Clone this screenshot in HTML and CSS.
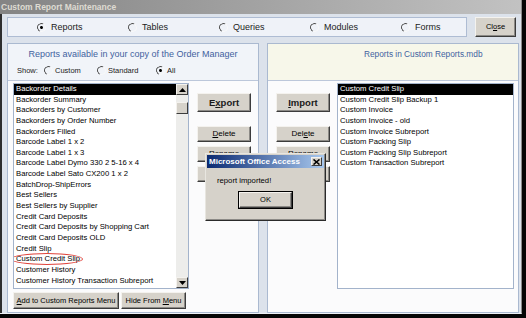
FILE: index.html
```html
<!DOCTYPE html>
<html lang="en">

<head>
    <meta charset="UTF-8">
    <title>Custom Report Maintenance</title>
    <link rel="stylesheet" href="styles.css">
</head>

<body>
    <div class="window">
        <div class="titlebar">Custom Report Maintenance</div>
        <div class="main">
            <!-- object type picker -->
            <div class="topbar">
                <div class="types">
                    <label class="opt"><span class="radio on"></span>Reports</label>
                    <label class="opt"><span class="radio"></span>Tables</label>
                    <label class="opt"><span class="radio"></span>Queries</label>
                    <label class="opt"><span class="radio"></span>Modules</label>
                    <label class="opt"><span class="radio"></span>Forms</label>
                </div>
                <button class="btn close-btn">Cl<u>o</u>se</button>
            </div>

            <div class="panels">
                <!-- Order Manager side -->
                <div class="panel">
                    <div class="panel-head left-head">
                        <div class="head-title">Reports available in your copy of the Order Manager</div>
                        <div class="show-row">
                            <span class="show-label">Show:</span>
                            <label class="opt small"><span class="radio"></span>Custom</label>
                            <label class="opt small"><span class="radio"></span>Standard</label>
                            <label class="opt small"><span class="radio on"></span>All</label>
                        </div>
                    </div>
                    <div class="panel-body left-body">
                        <div class="list-col">
                            <div class="listbox">
                                <ul class="items">
                                    <li class="sel">Backorder Details</li>
                                    <li>Backorder Summary</li>
                                    <li>Backorders by Customer</li>
                                    <li>Backorders by Order Number</li>
                                    <li>Backorders Filled</li>
                                    <li>Barcode Label 1 x 2</li>
                                    <li>Barcode Label 1 x 3</li>
                                    <li>Barcode Label Dymo 330 2 5-16 x 4</li>
                                    <li>Barcode Label Sato CX200 1 x 2</li>
                                    <li>BatchDrop-ShipErrors</li>
                                    <li>Best Sellers</li>
                                    <li>Best Sellers by Supplier</li>
                                    <li>Credit Card Deposits</li>
                                    <li>Credit Card Deposits by Shopping Cart</li>
                                    <li>Credit Card Deposits OLD</li>
                                    <li>Credit Slip</li>
                                    <li class="marked">Custom Credit Slip</li>
                                    <li>Customer History</li>
                                    <li>Customer History Transaction Subreport</li>
                                    <li>Customer Statement</li>
                                </ul>
                                <div class="scrollbar">
                                    <div class="sb-btn">
                                        <svg width="7" height="4" viewBox="0 0 7 4"><polygon points="3.5,0 7,4 0,4" fill="#000"/></svg>
                                    </div>
                                    <div class="sb-track">
                                        <div class="sb-thumb"></div>
                                    </div>
                                    <div class="sb-btn">
                                        <svg width="7" height="4" viewBox="0 0 7 4"><polygon points="0,0 7,0 3.5,4" fill="#000"/></svg>
                                    </div>
                                </div>
                            </div>
                            <div class="list-buttons">
                                <button class="btn add-btn"><u>A</u>dd to Custom Reports Menu</button>
                                <button class="btn hide-btn">Hide From <u>M</u>enu</button>
                            </div>
                        </div>
                        <div class="actions">
                            <button class="btn big">E<u>x</u>port</button>
                            <button class="btn"><u>D</u>elete</button>
                            <button class="btn">Rename</button>
                            <button class="btn"></button>
                        </div>
                    </div>
                </div>

                <!-- Custom Reports.mdb side -->
                <div class="panel">
                    <div class="panel-head right-head">
                        <div class="head-title">Reports in Custom Reports.mdb</div>
                    </div>
                    <div class="panel-body right-body">
                        <div class="actions">
                            <button class="btn big"><u>I</u>mport</button>
                            <button class="btn">Del<u>e</u>te</button>
                            <button class="btn">Rename</button>
                            <button class="btn"></button>
                        </div>
                        <div class="listbox custom-list">
                            <ul class="items">
                                <li class="sel">Custom Credit Slip</li>
                                <li>Custom Credit Slip Backup 1</li>
                                <li>Custom Invoice</li>
                                <li>Custom Invoice - old</li>
                                <li>Custom Invoice Subreport</li>
                                <li>Custom Packing Slip</li>
                                <li>Custom Packing Slip Subreport</li>
                                <li>Custom Transaction Subreport</li>
                            </ul>
                        </div>
                    </div>
                </div>
            </div>
        </div>

        <!-- message box on top -->
        <div class="msgbox">
            <div class="msg-title">
                <span>Microsoft Office Access</span>
                <span class="msg-x">
                    <svg width="7" height="6" viewBox="0 0 7 6"><path d="M0.5 0.5 L6.5 5.5 M6.5 0.5 L0.5 5.5" stroke="#000" stroke-width="1.6"/></svg>
                </span>
            </div>
            <div class="msg-text">report imported!</div>
            <div class="msg-actions">
                <button class="btn ok-btn">OK</button>
            </div>
        </div>
    </div>
</body>

</html>
```

FILE: styles.css
```css
html,
body {
    margin: 0;
}

body {
    width: 526px;
    height: 318px;
    overflow: hidden;
    background-color: #050505;
    font-family: 'Liberation Sans', Arial, sans-serif;
    font-size: 8px;
    color: #000;
}

.window {
    position: relative;
    width: 522px;
    height: 314px;
    box-sizing: border-box;
    display: flex;
    flex-direction: column;
    background-color: #dce2eb;
    border-right: 1px solid #8a8a8a;
    border-bottom: 1px solid #eef1f6;
}

.titlebar {
    height: 14px;
    line-height: 14px;
    background: linear-gradient(to right, #848484, #c2c2c2);
    color: #dedbd2;
    font-weight: bold;
    font-size: 8.5px;
    padding-left: 1px;
    white-space: nowrap;
}

.main {
    flex: 1;
    display: flex;
    flex-direction: column;
    padding: 3px 2px 0 5px;
    border-left: 2px solid #2e2e2e;
}

/* buttons */

.btn {
    box-sizing: border-box;
    padding: 0;
    margin: 0;
    font-family: 'Liberation Sans', Arial, sans-serif;
    font-size: 8px;
    color: #000;
    background-color: #d6d2ca;
    border: 1px solid;
    border-color: #f4f2ee #3c3c3c #3c3c3c #f4f2ee;
    box-shadow: inset -1px -1px 0 #8c8a86;
    line-height: 1;
    text-align: center;
}

.btn u {
    text-underline-offset: 1px;
}

/* radios */

.opt {
    display: flex;
    align-items: center;
    gap: 5px;
    font-size: 9px;
    color: #222;
    white-space: nowrap;
}

.radio {
    position: relative;
    width: 7px;
    height: 7px;
    flex: none;
    border-radius: 50%;
    border: 1px solid;
    border-color: #4a4a4a #f8f8f8 #f8f8f8 #4a4a4a;
    transform: rotate(-20deg);
}

.radio.on::after {
    content: '';
    position: absolute;
    left: 2px;
    top: 2px;
    width: 3px;
    height: 3px;
    border-radius: 50%;
    background-color: #000;
}

/* top strip */

.topbar {
    display: flex;
    gap: 8px;
    height: 20px;
}

.types {
    width: 460px;
    box-sizing: border-box;
    display: grid;
    grid-template-columns: repeat(5, 91px);
    align-items: center;
    padding-left: 29px;
    background-color: #eff2f8;
    border: 1px solid #aebcd3;
}

.close-btn {
    width: 41px;
    height: 20px;
    font-size: 7.5px;
}

/* panels */

.panels {
    display: flex;
    gap: 8px;
    margin-top: 6px;
}

.panel {
    width: 252px;
    height: 270px;
    box-sizing: border-box;
    display: flex;
    flex-direction: column;
    background-color: #fbfbfc;
    border: 1px solid #aab9d0;
}

.panel-head {
    height: 36px;
    border-bottom: 1px solid #bcc7da;
    box-sizing: content-box;
}

.head-title {
    height: 12px;
    line-height: 12px;
    margin-top: 4px;
    font-size: 8.3px;
    color: #4262a0;
    white-space: nowrap;
}

.left-head {
    background-color: #f1f4f9;
}

.left-head .head-title {
    text-align: center;
    font-size: 9px;
}

.right-head {
    background-color: #f7f7ea;
}

.right-head .head-title {
    padding-left: 96px;
}

.show-row {
    display: flex;
    align-items: center;
    height: 12px;
    margin-top: 4px;
    padding-left: 9px;
    font-size: 7.5px;
    color: #222;
}

.show-label {
    width: 27px;
}

.opt.small {
    font-size: 7.5px;
    gap: 2px;
}

.opt.small:nth-child(2) {
    width: 53px;
}

.opt.small:nth-child(3) {
    width: 59px;
}

.panel-body {
    flex: 1;
    display: flex;
    padding-top: 2px;
}

.left-body {
    padding-left: 5px;
}

.right-body {
    padding-left: 8px;
    gap: 7px;
}

.list-col {
    width: 176px;
    display: flex;
    flex-direction: column;
}

.left-body .actions {
    margin-left: 8px;
}

.actions {
    width: 54px;
    display: flex;
    flex-direction: column;
    padding-top: 10px;
}

.actions .btn {
    height: 16px;
    margin-top: 4px;
}

.actions .btn.big {
    height: 19px;
    margin: 0 0 10px;
    font-size: 9.5px;
    font-weight: bold;
    color: #1a1a1a;
}

/* list boxes */

.listbox {
    height: 206px;
    box-sizing: border-box;
    display: flex;
    background-color: #fff;
    border: 1px solid #a3b3cb;
    overflow: hidden;
}

.custom-list {
    width: 177px;
}

.items {
    flex: 1;
    margin: 0;
    padding: 0;
    list-style: none;
    overflow: hidden;
}

.items li {
    position: relative;
    height: 10.65px;
    line-height: 10.65px;
    padding-left: 2px;
    font-size: 7.7px;
    white-space: nowrap;
}

.items li.sel {
    background-color: #000;
    color: #fff;
}

.items li.marked::after {
    content: '';
    position: absolute;
    left: -3px;
    top: -1px;
    width: 70px;
    height: 10px;
    border: 1px solid #e0443c;
    border-radius: 50%;
}

.scrollbar {
    width: 12px;
    display: flex;
    flex-direction: column;
    background-color: #ededeb;
}

.sb-btn {
    height: 11px;
    box-sizing: border-box;
    display: flex;
    align-items: center;
    justify-content: center;
    background-color: #d6d2ca;
    border: 1px solid;
    border-color: #f4f2ee #3c3c3c #3c3c3c #f4f2ee;
}

.sb-track {
    flex: 1;
    padding-top: 7px;
}

.sb-thumb {
    height: 12px;
    box-sizing: border-box;
    background-color: #d6d2ca;
    border: 1px solid;
    border-color: #f4f2ee #3c3c3c #3c3c3c #f4f2ee;
}

.list-buttons {
    display: flex;
    gap: 2px;
    margin-top: 3px;
}

.list-buttons .btn {
    height: 17px;
    font-size: 7.5px;
    white-space: nowrap;
}

.add-btn {
    width: 106px;
}

.hide-btn {
    width: 65px;
}

/* message box */

.msgbox {
    position: absolute;
    left: 205px;
    top: 153px;
    width: 121px;
    height: 68px;
    box-sizing: border-box;
    background-color: #d6d2ca;
    border: 1px solid;
    border-color: #e8e6e0 #2a2a2a #2a2a2a #e8e6e0;
    box-shadow: inset -1px -1px 0 #8c8a86;
    padding: 1px;
}

.msg-title {
    height: 13px;
    display: flex;
    align-items: center;
    justify-content: space-between;
    padding: 0 2px 0 2px;
    background: linear-gradient(to right, #0b2a72, #a8c8ee);
    color: #fff;
    font-weight: bold;
    font-size: 8px;
    white-space: nowrap;
}

.msg-x {
    width: 11px;
    height: 9px;
    box-sizing: border-box;
    display: flex;
    align-items: center;
    justify-content: center;
    background-color: #d6d2ca;
    border: 1px solid;
    border-color: #f4f2ee #3c3c3c #3c3c3c #f4f2ee;
}

.msg-text {
    margin: 8px 0 0 10px;
    font-size: 7.7px;
    line-height: 10px;
}

.msg-actions {
    display: flex;
    justify-content: center;
    margin-top: 6px;
}

.ok-btn {
    width: 53px;
    height: 16px;
    font-size: 7.5px;
    outline: 1px solid #000;
    outline-offset: 0;
}
```
